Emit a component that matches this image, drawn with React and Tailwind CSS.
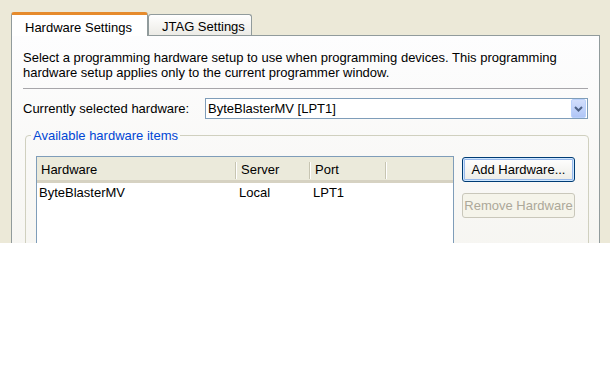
import React from "react";

const font = { fontFamily: '"Liberation Sans", Arial, sans-serif' };

const columns = [
  { name: "Hardware", w: "w-[200px]" },
  { name: "Server", w: "w-[74px]" },
  { name: "Port", w: "w-[76px]" },
];

const rows = [["ByteBlasterMV", "Local", "LPT1"]];

const Tab = ({ active, children }) => {
  if (active) {
    return (
      <div className="relative z-10 -mb-px flex h-[24px] w-[137px] items-center rounded-t-[3px] border-t-[3px] border-x border-t-[#E68B2C] border-x-[#919B9C] bg-white pl-[13px] pt-[4px]">
        {children}
      </div>
    );
  }
  return (
    <div className="flex h-[21px] w-[104px] items-center rounded-t-[3px] border border-b-0 border-[#919B9C] bg-gradient-to-b from-white to-[#ECEBE6] pl-[13px] pt-[3px]">
      {children}
    </div>
  );
};

const ListView = () => (
  <div className="h-[120px] w-[418px] shrink-0 border border-[#7F9DB9] bg-white">
    <div className="flex h-[26px] border-b-[3px] border-[#D6D2C2] bg-[#EBEADB]">
      {columns.map((c) => (
        <div key={c.name} className={`${c.w} flex items-center pl-[4px] pt-[3px]`}>
          <span className="flex-1">{c.name}</span>
          <span className="h-[17px] w-px bg-[#C7C5B2]" />
          <span className="h-[17px] w-px bg-white" />
        </div>
      ))}
    </div>
    {rows.map((r) => (
      <div key={r[0]} className="flex h-[18px] items-center pt-[2px]">
        {r.map((cell, i) => (
          <div key={i} className={`${columns[i].w} pl-[2px]`}>
            {cell}
          </div>
        ))}
      </div>
    ))}
  </div>
);

export default function App() {
  return (
    <div className="h-[384px] w-[610px] bg-white text-[13px] text-black" style={font}>
      <div className="h-[243px] overflow-hidden bg-[#ECE9D8] pl-[11px] pr-[10px] pt-[12px]">
        <div className="flex items-end">
          <Tab active>Hardware Settings</Tab>
          <Tab>JTAG Settings</Tab>
        </div>
        <div className="h-[260px] border border-[#919B9C] bg-gradient-to-b from-[#FDFDFE] to-[#F5F4EF] px-[11px] pt-[14px]">
          <p className="leading-[15px]">
            Select a programming hardware setup to use when programming devices. This programming
            <br />
            hardware setup applies only to the current programmer window.
          </p>
          <div className="mt-[8px] h-px bg-[#A7A6AA]" />
          <div className="mt-[9px] flex h-[21px] items-center">
            <span className="w-[182px]">Currently selected hardware:</span>
            <div className="flex h-[21px] flex-1 items-center border border-[#7F9DB9] bg-white pl-[2px]">
              <span className="flex-1">ByteBlasterMV [LPT1]</span>
              <div className="mr-px flex h-[19px] w-[15px] items-center justify-center rounded-[2px] border border-[#BAD1FC] bg-gradient-to-b from-[#D2DEFC] to-[#B0C6F7]">
                <svg width="9" height="6" viewBox="0 0 9 6">
                  <path d="M1 1l3.5 3.5L8 1" fill="none" stroke="#4D6185" strokeWidth="2" />
                </svg>
              </div>
            </div>
          </div>
          <fieldset className="mt-[9px] ml-[2px] rounded-[4px] border border-[#D0D0BF] pl-[10px] pr-[13px] pt-[13px] pb-[10px]">
            <legend className="-ml-[5px] px-[2px] leading-[15px] text-[#0046D5]">Available hardware items</legend>
            <div className="flex gap-[8px]">
              <ListView />
              <div className="flex flex-col gap-[11px] pt-px">
                <button className="h-[25px] w-[113px] rounded-[3px] border border-[#003C74] bg-gradient-to-b from-white to-[#ECEBE6] shadow-[inset_0_0_0_1px_#CEE7FF,inset_0_0_0_2px_#98B8EA]">
                  Add Hardware...
                </button>
                <button className="h-[25px] w-[113px] rounded-[3px] border border-[#C9C7BA] bg-[#F5F4EA] text-[#ACA899]">
                  Remove Hardware
                </button>
              </div>
            </div>
          </fieldset>
        </div>
      </div>
    </div>
  );
}
